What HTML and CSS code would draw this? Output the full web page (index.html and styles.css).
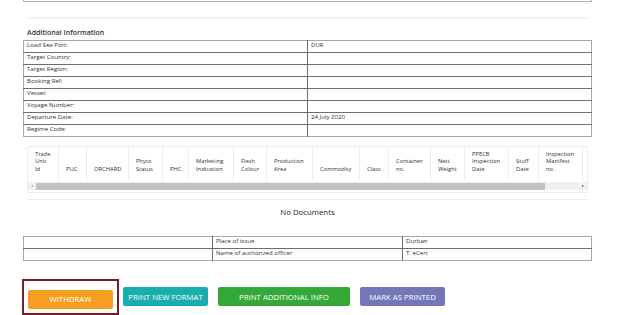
FILE: index.html
```html
<!DOCTYPE html>
<html>

<head>
    <meta name="viewport" content="width=device-width, initial-scale=1.0">
    <title>Certificate Details</title>
    <link rel="stylesheet" href="styles.css">
</head>

<body>
    <div class="page">
        <div class="topbox"></div>
        <div class="rule"></div>

        <h4 class="section-title">Additional Information</h4>
        <table class="info">
            <tr><td>Load Sea Port:</td><td>DUR</td></tr>
            <tr><td>Target Country:</td><td></td></tr>
            <tr><td>Target Region:</td><td></td></tr>
            <tr><td>Booking Ref:</td><td></td></tr>
            <tr><td>Vessel:</td><td></td></tr>
            <tr><td>Voyage Number:</td><td></td></tr>
            <tr><td>Departure Date:</td><td>24 July 2020</td></tr>
            <tr><td>Regime Code:</td><td></td></tr>
        </table>

        <div class="grid">
            <table class="units">
                <tr>
                    <th class="c1">Trade<br>Unit<br>Id</th>
                    <th class="c2">PUC</th>
                    <th class="c3">ORCHARD</th>
                    <th class="c4">Phyto<br>Status</th>
                    <th class="c5">PHC</th>
                    <th class="c6">Marketing<br>Indication</th>
                    <th class="c7">Flesh<br>Colour</th>
                    <th class="c8">Production<br>Area</th>
                    <th class="c9">Commodity</th>
                    <th class="c10">Class</th>
                    <th class="c11">Container<br>no.</th>
                    <th class="c12">Nett<br>Weight</th>
                    <th class="c13">PPECB<br>Inspection<br>Date</th>
                    <th class="c14">Stuff<br>Date</th>
                    <th class="c15">Inspection<br>Manifest<br>no.</th>
                    <th class="c16"></th>
                </tr>
            </table>
            <div class="scrollbar">
                <span class="arrow left"></span>
                <span class="thumb"></span>
                <span class="arrow right"></span>
            </div>
        </div>

        <div class="rule rule-docs"></div>
        <p class="nodocs">No Documents</p>

        <table class="sign">
            <tr><td class="s1"></td><td class="s2">Place of issue</td><td>Durban</td></tr>
            <tr><td class="s1"></td><td class="s2">Name of authorized officer</td><td>T. eCert</td></tr>
        </table>

        <div class="actions">
            <div class="focus-ring">
                <button class="btn btn-orange">WITHDRAW</button>
            </div>
            <button class="btn btn-teal">PRINT NEW FORMAT</button>
            <button class="btn btn-green">PRINT ADDITIONAL INFO</button>
            <button class="btn btn-purple">MARK AS PRINTED</button>
        </div>
    </div>
</body>

</html>
```

FILE: styles.css
```css
html {
    background-color: white;
}

body {
    margin: 0;
    font-family: "Open Sans", "Noto Sans", sans-serif;
    color: #333;
}

.page {
    width: 569px;
    margin-left: 23px;
}

.topbox {
    height: 1px;
    border: 1px solid #b5b5b5;
    border-top: none;
}

.rule {
    margin: 15px 4px 0;
    border-top: 2px solid #f4f4f4;
}

.section-title {
    margin: 9px 0 3px 4px;
    font-size: 7px;
    font-weight: 600;
    color: #333;
}

/* additional information table */
.info {
    width: 100%;
    border-collapse: collapse;
    border: 1px solid #a8a8a8;
    font-size: 6.1px;
}

.info td {
    height: 11px;
    padding: 0 3px;
    border-top: 1px solid #6e6e6e;
    vertical-align: top;
    line-height: 7px;
}

.info tr:first-child td {
    border-top: 1px solid #a8a8a8;
}

.info td:first-child {
    width: 277px;
    border-right: 1px solid #6e6e6e;
}

/* trade unit grid */
.grid {
    margin: 9px 4px 0;
    border: 1px solid #ececec;
    border-radius: 2px;
}

.units {
    border-collapse: collapse;
    table-layout: fixed;
    width: 100%;
    font-size: 5.8px;
}

.units th {
    height: 26px;
    padding: 0 0 8px 7px;
    text-align: left;
    font-weight: normal;
    vertical-align: bottom;
    line-height: 7.4px;
    border-right: 1px solid #ededed;
    color: #333;
}

.units th:last-child {
    border-right: none;
}

.c1 { width: 23px; }
.c2 { width: 20px; }
.c3 { width: 34px; }
.c4 { width: 26px; }
.c5 { width: 18px; }
.c6 { width: 37px; }
.c7 { width: 25px; }
.c8 { width: 38px; }
.c9 { width: 39px; }
.c10 { width: 21px; }
.c11 { width: 34px; }
.c12 { width: 26px; }
.c13 { width: 36px; }
.c14 { width: 22px; }
.c15 { width: 36px; }

.scrollbar {
    display: flex;
    align-items: center;
    height: 8px;
    margin-top: 1px;
    margin-bottom: 2px;
    background-color: #f1f1f1;
}

.thumb {
    width: 509px;
    height: 7px;
    background-color: #c1c1c1;
}

.arrow {
    width: 0;
    height: 0;
    border-top: 1.5px solid transparent;
    border-bottom: 1.5px solid transparent;
}

.arrow.left {
    margin: 0 3px 0 3px;
    border-right: 2px solid #a3a3a3;
}

.arrow.right {
    margin-left: auto;
    margin-right: 3px;
    border-left: 2px solid #505050;
}

.rule-docs {
    margin-top: 6px;
    border-top: 1px solid #ededed;
}

.nodocs {
    margin: 7px 0 0;
    text-align: center;
    font-size: 7.8px;
    color: #222;
}

/* signature table */
.sign {
    width: 100%;
    margin-top: 19px;
    border-collapse: collapse;
    border: 1px solid #a8a8a8;
    font-size: 6.1px;
}

.sign td {
    height: 11px;
    padding: 0 3px;
    vertical-align: top;
    line-height: 7px;
    border-top: 1px solid #6e6e6e;
}

.sign tr:first-child td {
    border-top: 1px solid #a8a8a8;
}

.sign .s1 {
    width: 182px;
    border-right: 1px solid #6e6e6e;
}

.sign .s2 {
    width: 183px;
    border-right: 1px solid #6e6e6e;
}

/* buttons */
.actions {
    display: flex;
    align-items: center;
    margin-top: 18px;
    margin-left: -1px;
}

.focus-ring {
    padding: 4px;
    border: 2px solid #7b1b27;
}

.btn {
    height: 19px;
    padding: 0;
    border: none;
    border-radius: 2px;
    color: white;
    font-family: "Open Sans", "Noto Sans", sans-serif;
    font-size: 7.8px;
    cursor: pointer;
}

.btn-orange {
    width: 85px;
    background-color: #f59e1f;
}

.btn-teal {
    width: 85px;
    margin-left: 4px;
    background-color: #1aadad;
}

.btn-green {
    width: 132px;
    margin-left: 10px;
    background-color: #34a937;
}

.btn-purple {
    width: 85px;
    margin-left: 10px;
    background-color: #7377b7;
}
```
